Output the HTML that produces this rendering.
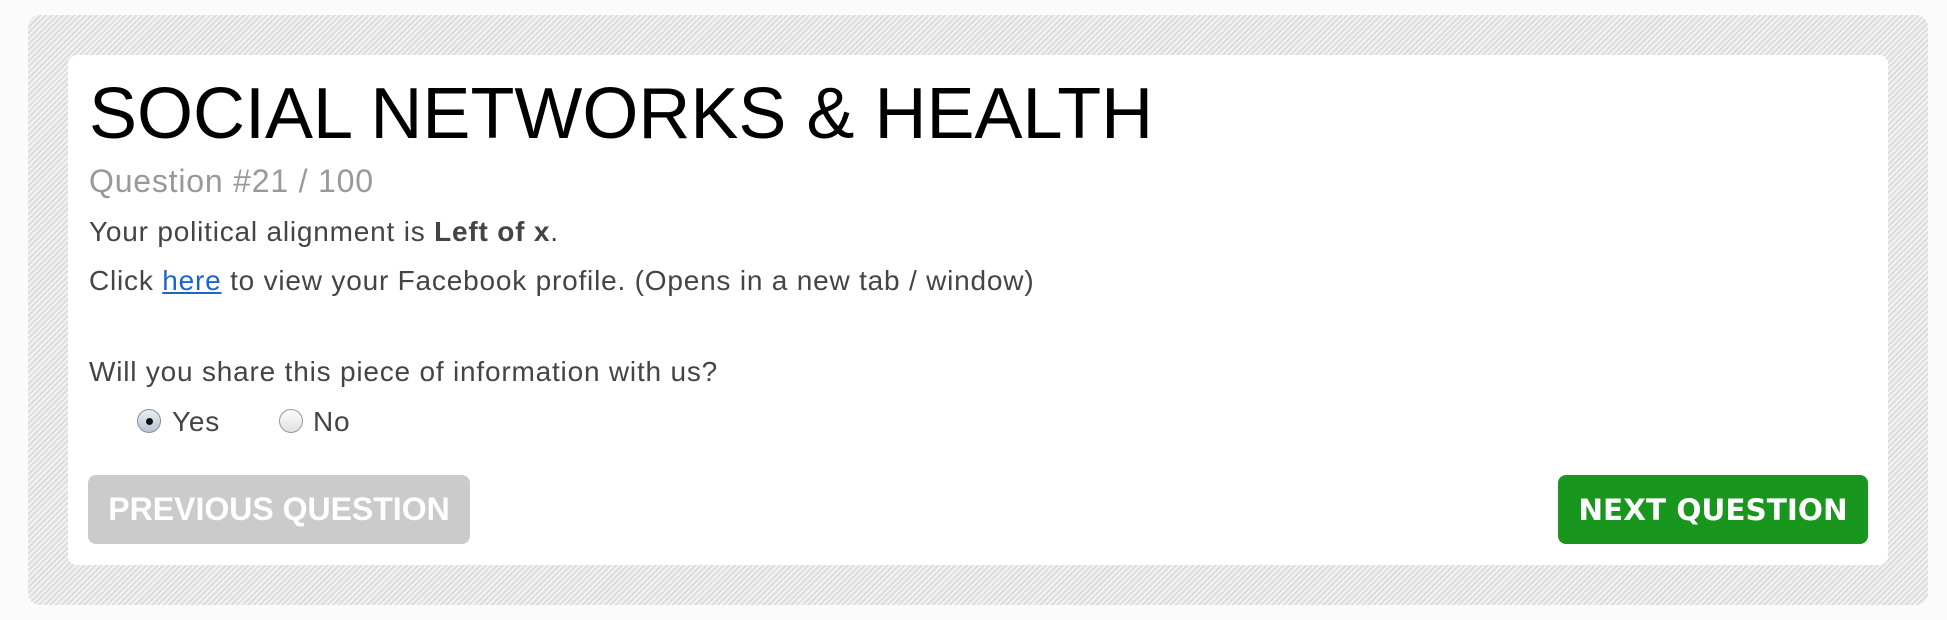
<!DOCTYPE html>
<html><head><meta charset="utf-8"><style>
body{margin:0;width:1947px;height:620px;position:relative;overflow:hidden;background:#fbfbfb;font-family:"Liberation Sans",sans-serif;}
.outer{position:absolute;left:28px;top:15px;width:1900px;height:590px;border-radius:12px;background:repeating-linear-gradient(135deg,#dcdcdc 0 2px,#f3f3f3 2px 4px);}
.panel{position:absolute;left:68px;top:55px;width:1820px;height:510px;border-radius:9px;background:#fff;}
.t{position:absolute;left:89px;line-height:1;white-space:nowrap;color:#444;font-size:28px;letter-spacing:0.8px;}
.btn{position:absolute;top:475px;height:69px;border-radius:8px;color:#fff;font-weight:bold;display:flex;align-items:center;justify-content:center;}
.r{position:absolute;width:24px;height:24px;border-radius:50%;border:1px solid #999;background:linear-gradient(#fdfdfd,#e0e0e0);box-sizing:border-box;}
</style></head><body>
<div class="outer"></div>
<div class="panel"></div>
<div class="t" style="top:78px;font-size:72px;color:#000;letter-spacing:0;">SOCIAL NETWORKS &amp; HEALTH</div>
<div class="t" style="top:165px;font-size:32px;color:#999;letter-spacing:0.8px;">Question #21 / 100</div>
<div class="t" style="top:218px;">Your political alignment is <b>Left of x</b>.</div>
<div class="t" style="top:267px;">Click <span style="color:#1a66cc;text-decoration:underline;">here</span> to view your Facebook profile. (Opens in a new tab / window)</div>
<div class="t" style="top:358px;">Will you share this piece of information with us?</div>
<div class="r" style="left:137px;top:409px;background:linear-gradient(#e8eef5,#b8c4d2);border-color:#8090a0;"><div style="position:absolute;left:8px;top:8px;width:7px;height:7px;border-radius:50%;background:#111;"></div></div>
<div class="t" style="top:408px;left:172px;">Yes</div>
<div class="r" style="left:279px;top:409px;"></div>
<div class="t" style="top:408px;left:313px;">No</div>
<div class="btn" style="left:88px;width:382px;background:#cbcbcb;font-size:32px;">PREVIOUS QUESTION</div>
<div class="btn" style="left:1558px;width:310px;background:#18961e;font-size:29.5px;font-family:'DejaVu Sans',sans-serif;">NEXT QUESTION</div>
</body></html>
